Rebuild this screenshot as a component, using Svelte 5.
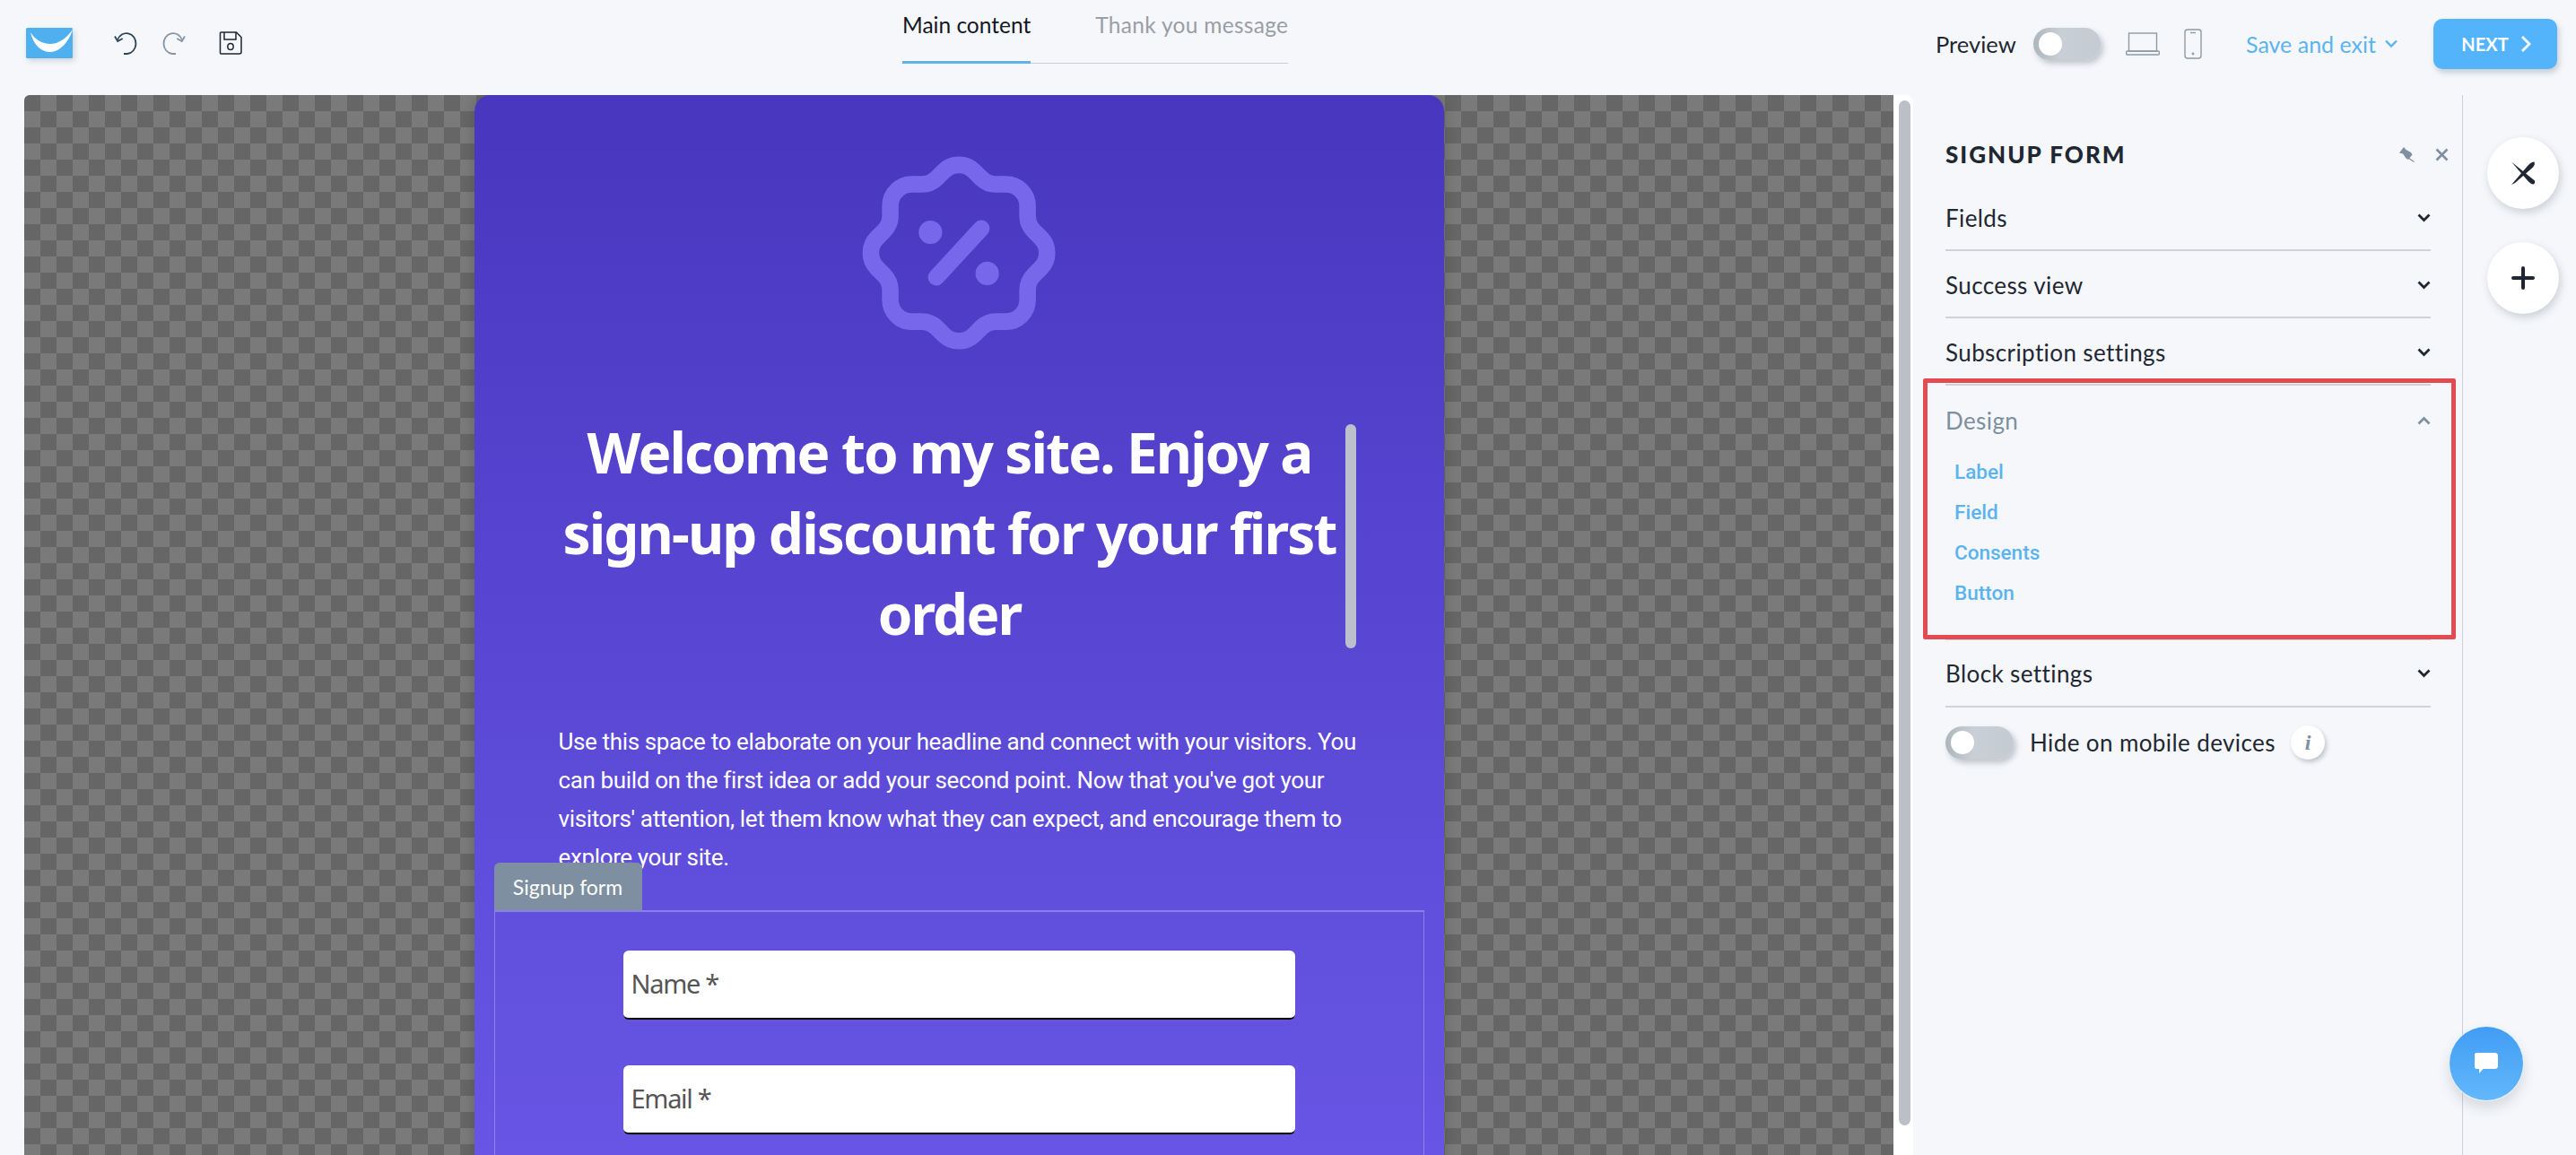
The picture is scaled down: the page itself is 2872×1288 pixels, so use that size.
<script>
  const sections = [
    { name: 'Fields' },
    { name: 'Success view' },
    { name: 'Subscription settings' }
  ];
  const designItems = ['Label', 'Field', 'Consents', 'Button'];
</script>

<div class="page">
  <header class="top">
    <div class="top-left">
      <svg class="logo" width="52" height="34" viewBox="0 0 52 34">
        <rect width="52" height="34" rx="1.5" fill="#4fb0ef"/>
        <path d="M5 5C8 19 17 27 27 27C38 27 48 15 52 2C45 12 36 18 27 18C18 18 10 13 5 5Z" fill="#fff"/>
      </svg>
      <svg class="undo" width="30" height="26" viewBox="0 0 30 26" fill="none" stroke="#2c4358" stroke-width="1.800">
        <path d="M11 25h4a10.600 11.500 0 1 0-11-15.500"/>
        <path d="M1 5.500l3.200 5.500 5.500-3"/>
      </svg>
      <svg class="redo" width="30" height="26" viewBox="0 0 30 26" fill="none" stroke="#8494a3" stroke-width="1.800">
        <path d="M19 25h-4a10.600 11.500 0 1 1 11-15.500"/>
        <path d="M29 5.500l-3.200 5.500-5.500-3"/>
      </svg>
      <svg class="save" width="26" height="26" viewBox="0 0 26 26" fill="none" stroke="#1f2733" stroke-width="1.500">
        <path d="M2.500 1h17l5.500 5.500v16.500a2 2 0 0 1-2 2h-20.500a1 1 0 0 1-1-1v-22a1 1 0 0 1 1-1z"/>
        <path d="M6 1v8h13v-8"/>
        <ellipse cx="13" cy="17" rx="3.200" ry="3.400"/>
      </svg>
    </div>
    <nav class="tabs">
      <span class="tab active">Main content</span>
      <span class="tab">Thank you message</span>
    </nav>
    <div class="top-right">
      <span class="preview">Preview</span>
      <span class="toggle preview-toggle"><i></i></span>
      <svg class="laptop" width="38" height="26" viewBox="0 0 38 26" fill="none" stroke="#8f9aa5" stroke-width="1.400">
        <rect x="3.500" y="1" width="31" height="20"/>
        <rect x="0.700" y="21" width="36.600" height="4" rx="1"/>
      </svg>
      <svg class="phone" width="20" height="34" viewBox="0 0 20 34" fill="none" stroke="#8f9aa5" stroke-width="1.400">
        <rect x="1" y="1" width="18" height="32" rx="3"/>
        <path d="M7 4.500h6"/>
        <circle cx="10" cy="28" r="1.400" fill="#8f9aa5" stroke="none"/>
      </svg>
      <span class="save-exit">Save and exit
        <svg width="14" height="10" viewBox="0 0 14 10" fill="none" stroke="#5bb4ee" stroke-width="2.400"><path d="M1 1.500l6 6 6-6"/></svg>
      </span>
      <button class="next">NEXT
        <svg width="12" height="20" viewBox="0 0 12 20" fill="none" stroke="#fff" stroke-width="2.800"><path d="M2 2l8 8-8 8"/></svg>
      </button>
    </div>
  </header>

  <main class="main">
    <section class="canvas">
      <article class="card">
        <svg class="badge" width="262" height="262" viewBox="0 0 24 24" fill="none" stroke="#7768eb" stroke-width="1.700" stroke-linecap="round">
          <path d="M5 7.200a2.200 2.200 0 0 1 2.200-2.200h1a2.200 2.200 0 0 0 1.550-.64l.7-.7a2.200 2.200 0 0 1 3.120 0l.7.7c.412.41.97.64 1.550.64h1a2.200 2.200 0 0 1 2.200 2.200v1c0 .58.23 1.138.64 1.550l.7.7a2.200 2.200 0 0 1 0 3.120l-.7.7a2.200 2.200 0 0 0-.64 1.550v1a2.200 2.200 0 0 1-2.200 2.200h-1a2.200 2.200 0 0 0-1.550.64l-.7.7a2.200 2.200 0 0 1-3.120 0l-.7-.7a2.200 2.200 0 0 0-1.550-.64h-1a2.200 2.200 0 0 1-2.200-2.200v-1a2.200 2.200 0 0 0-.64-1.550l-.7-.7a2.200 2.200 0 0 1 0-3.120l.7-.7a2.200 2.200 0 0 0 .64-1.550v-1"/>
          <path d="M9.700 14.500l4.600-5"/>
          <circle cx="9.100" cy="9.900" r="1.200" fill="#7768eb" stroke="none"/>
          <circle cx="14.900" cy="14.100" r="1.200" fill="#7768eb" stroke="none"/>
        </svg>
        <div class="headline">
          <h1>Welcome to my site. Enjoy a<br>sign-up discount for your first<br>order</h1>
          <span class="handle"></span>
        </div>
        <p class="copy">Use this space to elaborate on your headline and connect with your visitors. You<br>can build on the first idea or add your second point. Now that you've got your<br>visitors' attention, let them know what they can expect, and encourage them to<br>explore your site.</p>
        <div class="form-block">
          <div class="form-tab">Signup form</div>
          <div class="form-box">
            <div class="input">Name *</div>
            <div class="input">Email *</div>
          </div>
        </div>
      </article>
    </section>
    <div class="rail"><span class="thumb"></span></div>

    <aside class="panel">
      <div class="panel-head">
        <h2>SIGNUP FORM</h2>
        <svg class="pin" width="17" height="17" viewBox="0 0 17 17">
          <path d="M0 6.500L5 0l2.500 3L13 6l1.500 2.500L10 14l-2.500-1.500L4 7.500z" fill="#7d8fa0"/>
          <path d="M10 12l6.500 4.500" stroke="#7d8fa0" stroke-width="1.200" fill="none"/>
        </svg>
        <svg class="close" width="15" height="15" viewBox="0 0 15 15" fill="none" stroke="#7d8fa0" stroke-width="2.600"><path d="M1.500 1.500l12 12M13.500 1.500l-12 12"/></svg>
      </div>
      {#each sections as s}
        <div class="row">
          <span>{s.name}</span>
          <svg width="15" height="10" viewBox="0 0 15 10" fill="none" stroke="#1f2733" stroke-width="2.800"><path d="M1.500 1.500l6 6 6-6"/></svg>
        </div>
      {/each}
      <div class="design">
        <div class="row open">
          <span>Design</span>
          <svg width="15" height="10" viewBox="0 0 15 10" fill="none" stroke="#7d8fa0" stroke-width="2.800"><path d="M1.500 8.500l6-6 6 6"/></svg>
        </div>
        <ul class="links">
          {#each designItems as d}<li>{d}</li>{/each}
        </ul>
        <span class="highlight"></span>
      </div>
      <div class="row settings">
        <span>Block settings</span>
        <svg width="15" height="10" viewBox="0 0 15 10" fill="none" stroke="#1f2733" stroke-width="2.800"><path d="M1.500 1.500l6 6 6-6"/></svg>
      </div>
      <div class="hide-row">
        <span class="toggle mobile-toggle"><i></i></span>
        <span class="hide-label">Hide on mobile devices</span>
        <span class="info">i</span>
      </div>
    </aside>

    <div class="actions">
      <button class="fab">
        <svg width="28" height="28" viewBox="0 0 28 28" fill="#1f2733"><path d="M1 1.500L27 22.500Q27.500 26.500 25 26.500Q22.500 26 20 23.500z"/><path d="M1 27L19.500 5.500Q23 1.500 26.500 1.500Q27.800 4.500 24.500 8L5 25z"/></svg>
      </button>
      <button class="fab">
        <svg width="28" height="28" viewBox="0 0 28 28" fill="none" stroke="#1f2733" stroke-width="4" stroke-linecap="round"><path d="M14 3v22M3 14h22"/></svg>
      </button>
      <button class="chat">
        <svg width="26" height="24" viewBox="0 0 26 24"><path d="M3.500 0h19a3.500 3.500 0 0 1 3.500 3.500v11a3.500 3.500 0 0 1-3.500 3.500h-13l-4.500 5v-5h-2a3.500 3.500 0 0 1-3.500-3.500v-11a3.500 3.500 0 0 1 3.500-3.500z" fill="#fff"/></svg>
      </button>
    </div>
  </main>
</div>

<style>
  :global(body) {
    margin: 0;
    background: #f5f7fb;
  }
  .page {
    width: 2872px;
    height: 1288px;
    overflow: hidden;
    background: #f5f7fb;
    font-family: "Lato", "Noto Sans", sans-serif;
    color: #1f2733;
  }
  .top {
    height: 106px;
    display: grid;
    grid-template-columns: 1006px 430px 1fr;
  }
  .top-left {
    display: flex;
    align-items: center;
    padding: 0 0 4px 29px;
    height: 100px;
    box-sizing: border-box;
  }
  .logo { margin-right: 46px; filter: drop-shadow(2px 3px 3px rgba(0,0,0,.14)); }
  .undo { margin-right: 20px; }
  .redo { margin-right: 37px; }
  .tabs {
    display: flex;
    gap: 72px;
    height: 71px;
    box-sizing: border-box;
    border-bottom: 1px solid #ccd0d6;
  }
  .tab {
    font-size: 24.500px;
    line-height: 56px;
    letter-spacing: .300px;
    color: #9a9ea6;
    height: 71px;
    box-sizing: border-box;
    white-space: nowrap;
  }
  .tab.active {
    color: #14181f;
    letter-spacing: 0;
    border-bottom: 3px solid #5fb3e8;
  }
  .top-right {
    display: flex;
    align-items: center;
    height: 98px;
    padding-left: 722px;
    white-space: nowrap;
  }
  .preview { font-size: 25.500px; width: 109px; }
  .toggle {
    display: flex;
    align-items: center;
    box-sizing: border-box;
    border-radius: 20px;
    background: linear-gradient(90deg, #aeb6bd, #c8cfd6 40%, #c4cbd2);
    box-shadow: 3px 4px 6px rgba(60,70,80,.28);
  }
  .toggle i {
    display: block;
    width: 26px;
    height: 26px;
    border-radius: 50%;
    background: #fff;
  }
  .preview-toggle { width: 75px; height: 36px; padding-left: 6px; margin-right: 28px; }
  .laptop { margin-right: 27px; }
  .phone { margin-right: 49px; }
  .save-exit {
    display: flex;
    align-items: center;
    gap: 10px;
    width: 209px;
    font-size: 25px;
    color: #5bb4ee;
  }
  .next {
    width: 138px;
    height: 56px;
    border: 0;
    border-radius: 10px;
    background: #53b4fb;
    color: #fff;
    font: 700 20px "Lato", sans-serif;
    display: flex;
    align-items: center;
    justify-content: center;
    gap: 13px;
    padding-left: 8px;
    box-shadow: 2px 4px 6px rgba(60,80,100,.25);
  }

  .main {
    display: flex;
    height: 1182px;
    padding-left: 27px;
  }
  .canvas {
    width: 2084px;
    height: 100%;
    overflow: hidden;
    border-top-left-radius: 6px;
    background-color: #7a7a7a;
    background-image: conic-gradient(transparent 25%, #666 0 50%, transparent 0 75%, #666 0);
    background-size: 36px 36px;
  }
  .card {
    width: 1081px;
    height: 1400px;
    margin: 0 auto;
    border-radius: 18px 18px 0 0;
    background: linear-gradient(180deg, #4936be 0, #5b49d6 674px, #6855e5 1182px);
    display: flex;
    flex-direction: column;
    box-shadow: 0 0 14px rgba(0,0,0,.18);
  }
  .badge { align-self: center; margin-top: 45px; flex: none; }
  .headline {
    position: relative;
    margin-top: 46px;
    padding-right: 21px;
  }
  h1 {
    margin: 0;
    font: 700 62px/90px "Noto Sans", sans-serif;
    letter-spacing: -1.900px;
    color: #fff;
    text-align: center;
    white-space: nowrap;
  }
  .handle {
    position: absolute;
    left: 971px;
    top: 14px;
    width: 12px;
    height: 250px;
    border-radius: 6px;
    background: #bcc0cc;
  }
  .copy {
    margin: 77px 0 0 94px;
    font: 400 26px/43px "Roboto", sans-serif;
    letter-spacing: -.360px;
    color: #fff;
    white-space: nowrap;
  }
  .form-block {
    margin: -16px 22px 0;
    position: relative;
  }
  .form-tab {
    width: 165px;
    height: 53px;
    box-sizing: border-box;
    border-radius: 6px 6px 0 0;
    background: #7d8fa0;
    color: #fff;
    font-size: 23px;
    line-height: 55px;
    text-align: center;
  }
  .form-box {
    border: 1px solid rgba(255,255,255,.28);
    border-top-width: 2px;
    padding: 43px 0 0 143px;
    display: flex;
    flex-direction: column;
    gap: 51px;
    height: 400px;
    box-sizing: border-box;
  }
  .input {
    width: 749px;
    height: 77px;
    box-sizing: border-box;
    background: #fff;
    border-radius: 6px;
    border-bottom: 2px solid #000;
    padding-left: 9px;
    font: 400 29px/73px "Noto Sans", sans-serif;
    letter-spacing: -1.300px;
    color: #555;
  }

  .rail {
    width: 22px;
    height: 100%;
    background: #fff;
    border-top-right-radius: 8px;
    box-sizing: border-box;
    padding: 6px 3px 0 6px;
  }
  .thumb {
    display: block;
    width: 13px;
    height: 1143px;
    border-radius: 7px;
    background: #bcc0c6;
  }

  .panel {
    width: 613px;
    height: 100%;
    box-sizing: border-box;
    padding: 0 35px 0 36px;
    border-right: 1px solid #cdd1d7;
  }
  .panel-head {
    display: flex;
    align-items: center;
    height: 99px;
    padding-top: 33px;
    box-sizing: border-box;
    width: 561px;
  }
  h2 {
    margin: 0;
    flex: 1;
    font: 900 26px "Lato", sans-serif;
    letter-spacing: 2px;
    color: #1f2733;
  }
  .pin { margin-right: 23px; }
  .row {
    height: 75px;
    box-sizing: border-box;
    display: flex;
    justify-content: space-between;
    align-items: center;
    border-bottom: 2px solid #cfd2d7;
    font-size: 26px;
    letter-spacing: .400px;
    padding-top: 2px;
  }
  .row.settings { padding-top: 0; }
  .row.open {
    color: #7d8fa0;
    border-bottom: 0;
    height: 76px;
  }
  .design {
    position: relative;
    height: 283px;
    border-bottom: 1px solid #cfd2d7;
  }
  .links {
    list-style: none;
    margin: -2px 0 0 10px;
    padding: 0;
  }
  .links li {
    font: 500 22.500px/45px "Roboto", sans-serif;
    color: #5bb4ee;
  }
  .highlight {
    position: absolute;
    left: -25px;
    right: -28px;
    top: -8px;
    height: 291px;
    box-sizing: border-box;
    border: 5px solid #e34b50;
    border-radius: 2px;
  }
  .hide-row {
    display: flex;
    align-items: center;
    margin-top: 20px;
  }
  .mobile-toggle { width: 76px; height: 37px; padding-left: 6px; margin-right: 18px; }
  .hide-label { font-size: 26px; letter-spacing: .400px; width: 291px; white-space: nowrap; }
  .info {
    width: 38px;
    height: 38px;
    border-radius: 50%;
    background: #fff;
    box-shadow: 2px 3px 5px rgba(60,70,80,.28);
    font: italic 700 24px/38px "Liberation Serif", serif;
    text-align: center;
    color: #7d8fa0;
  }

  .actions {
    position: relative;
    flex: 1;
    display: flex;
    flex-direction: column;
    align-items: center;
    gap: 37px;
    padding-top: 47px;
    padding-left: 8px;
    box-sizing: border-box;
  }
  .fab {
    width: 80px;
    height: 80px;
    flex: none;
    padding: 0;
    border: 0;
    border-radius: 50%;
    background: #fff;
    display: flex;
    align-items: center;
    justify-content: center;
    box-shadow: 2px 4px 10px rgba(60,70,80,.22);
  }
  .chat {
    position: absolute;
    left: -16px;
    top: 1038px;
    width: 84px;
    height: 84px;
    box-sizing: border-box;
    border: 1px solid #e3f2ff;
    border-radius: 50%;
    background: linear-gradient(180deg, #419cf3, #63b8fb);
    display: flex;
    align-items: center;
    justify-content: center;
    padding: 0;
    box-shadow: 0 8px 14px rgba(60,70,80,.16);
  }
</style>
